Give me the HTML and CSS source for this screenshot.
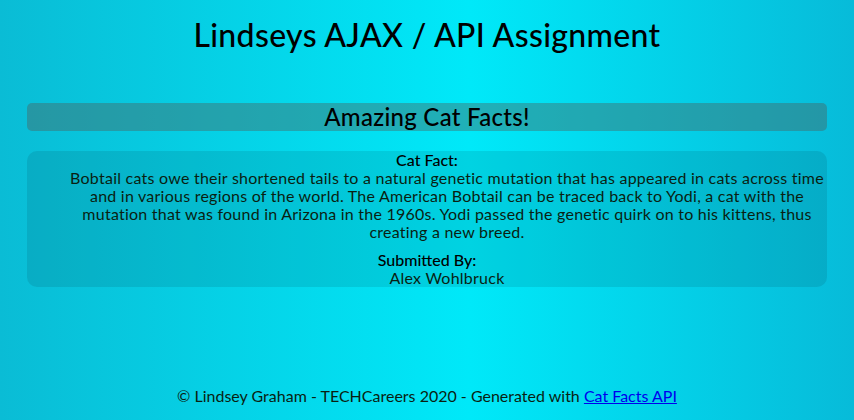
FILE: index.html
```html
<!DOCTYPE html>
<html lang="en">
<head>
<meta charset="utf-8">
<title>Lindseys AJAX / API Assignment</title>
<link rel="stylesheet" href="styles.css">
</head>
<body>
<div class="page">
  <h1 class="title">Lindseys AJAX / API Assignment</h1>
  <main class="content">
    <h2 class="bar">Amazing Cat Facts!</h2>
    <section class="card">
      <dl class="fact">
        <dt>Cat Fact:</dt>
        <dd>Bobtail cats owe their shortened tails to a natural genetic mutation that has appeared in cats across time and in various regions of the world. The American Bobtail can be traced back to Yodi, a cat with the mutation that was found in Arizona in the 1960s. Yodi passed the genetic quirk on to his kittens, thus creating a new breed.</dd>
      </dl>
      <dl class="fact">
        <dt>Submitted By:</dt>
        <dd>Alex Wohlbruck</dd>
      </dl>
    </section>
  </main>
  <footer class="footer">© Lindsey Graham - TECHCareers 2020 - Generated with <a href="#">Cat Facts API</a></footer>
</div>
</body>
</html>
```

FILE: styles.css
```css
html, body {
  margin: 0;
  padding: 0;
  height: 100%;
}
body {
  background: linear-gradient(to right, #0abcd5 0%, #00e9f9 55%, #07bbd9 100%);
  font-family: Lato, "Open Sans", sans-serif;
  color: #000;
}
.page {
  height: 420px;
  display: flex;
  flex-direction: column;
  align-items: center;
}
.title {
  margin: 15px 0 0;
  font-size: 32px;
  line-height: 40px;
  font-weight: 500;
  letter-spacing: 0.33px;
  text-align: center;
}
.content {
  width: 800px;
  margin-top: 48px;
  display: flex;
  flex-direction: column;
  gap: 20px;
}
.bar {
  margin: 0;
  height: 28px;
  line-height: 28px;
  font-size: 24px;
  font-weight: 500;
  letter-spacing: 0.28px;
  text-align: center;
  border-radius: 5px;
  background: rgba(80, 92, 87, 0.4);
}
.card {
  border-radius: 10px;
  background: rgba(0, 20, 30, 0.1);
  display: flex;
  flex-direction: column;
  gap: 10px;
}
.fact {
  margin: 0;
  text-align: center;
  font-size: 16px;
  line-height: 18px;
}
.fact dt {
  font-weight: 500;
}
.fact dd {
  margin: 0 0 0 40px;
  letter-spacing: 0.24px;
  color: #0a1f12;
}
.footer {
  margin-top: auto;
  margin-bottom: 15px;
  font-size: 16px;
  line-height: 18px;
  color: #0a1f12;
}
.footer a {
  color: #0000ee;
}
```
